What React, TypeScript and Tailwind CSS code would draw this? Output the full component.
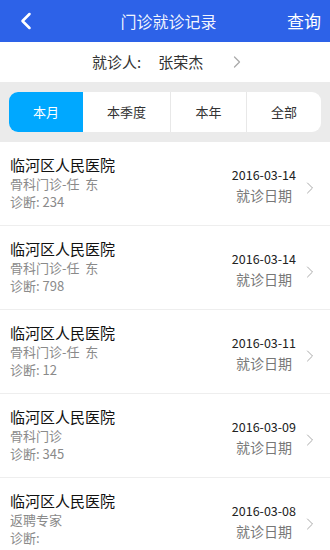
import { ChevronLeft, ChevronRight } from 'lucide-react'

const records = [
  { hospital: '临河区人民医院', dept: '骨科门诊-任  东', diag: '诊断: 234', date: '2016-03-14' },
  { hospital: '临河区人民医院', dept: '骨科门诊-任  东', diag: '诊断: 798', date: '2016-03-14' },
  { hospital: '临河区人民医院', dept: '骨科门诊-任  东', diag: '诊断: 12', date: '2016-03-11' },
  { hospital: '临河区人民医院', dept: '骨科门诊', diag: '诊断: 345', date: '2016-03-09' },
  { hospital: '临河区人民医院', dept: '返聘专家', diag: '诊断:', date: '2016-03-08' },
]

const font = { fontFamily: '"Noto Sans CJK SC", "Liberation Sans", sans-serif' }

export default function App() {
  return (
    <div className="h-[550px] w-[330px] overflow-hidden bg-white" style={font}>
      <header className="flex h-[42px] items-center justify-between bg-[#2d62e8] pl-[12px] pr-[9px] text-white">
        <ChevronLeft className="h-7 w-7" strokeWidth={2.2} />
        <h1 className="ml-[10px] text-[16px] text-white/95">门诊就诊记录</h1>
        <span className="text-[17px]">查询</span>
      </header>
      <div className="flex h-[40px] items-center text-[15px] text-[#333]">
        <span className="ml-[92px]">就诊人:</span>
        <span className="ml-[17px]">张荣杰</span>
        <ChevronRight className="ml-[24px] h-5 w-5 text-[#aaa]" strokeWidth={1.5} />
      </div>
      <div className="bg-[#ebebeb] px-[9px] py-[10px]">
        <div className="flex h-[40px] overflow-hidden rounded-[9px] bg-white text-[13px] text-[#333]">
          <div className="flex w-[74px] items-center justify-center bg-[#00a8ff] text-white">本月</div>
          <div className="flex w-[88px] items-center justify-center border-r border-[#e8e8e8]">本季度</div>
          <div className="flex w-[76px] items-center justify-center border-r border-[#e8e8e8]">本年</div>
          <div className="flex flex-1 items-center justify-center">全部</div>
        </div>
      </div>
      <ul>
        {records.map((r, i) => (
          <li key={i} className="flex h-[84px] items-center border-b border-[#eeeeee] pl-[10px] pr-[10px]">
            <div className="flex-1 pb-[2px]">
              <div className="text-[15px] leading-[20px] text-[#111]">{r.hospital}</div>
              <div className="whitespace-pre text-[13px] leading-[18px] text-[#8a8a8a]">{r.dept}</div>
              <div className="text-[13px] leading-[18px] text-[#8a8a8a]">{r.diag}</div>
            </div>
            <div className="flex flex-col items-center pt-[4px]">
              <span className="text-[12.5px] leading-[18px] text-[#222]">{r.date}</span>
              <span className="text-[14px] leading-[22px] text-[#777]">就诊日期</span>
            </div>
            <ChevronRight className="ml-[4px] mt-[8px] h-5 w-5 text-[#aaa]" strokeWidth={1.2} />
          </li>
        ))}
      </ul>
    </div>
  )
}
